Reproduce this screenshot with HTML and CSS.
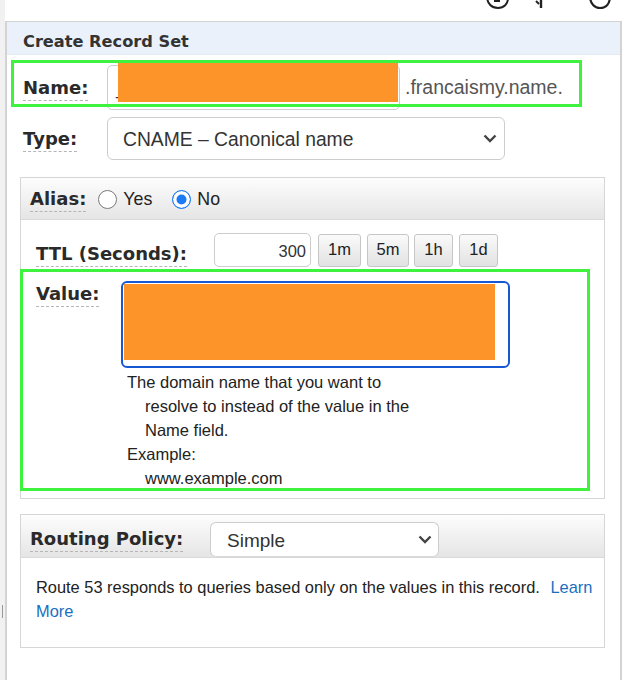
FILE: index.html
```html
<!DOCTYPE html>
<html>
<head>
<meta charset="utf-8">
<title>Create Record Set</title>
<link rel="stylesheet" href="styles.css">
</head>
<body>
<div class="page">
  <div class="leftstrip"><span class="tick"></span></div>
  <div class="main">
    <div class="topbar">
      <svg class="topicons" width="156" height="21" viewBox="0 0 156 21">
        <path d="M17 -4 C17 4 22 8 28 8 C34 8 38 4 38 -2" fill="none" stroke="#222" stroke-width="2"/>
        <path d="M24 1 L30 1" stroke="#222" stroke-width="2"/>
        <path d="M71 -2 L71 8" stroke="#222" stroke-width="2.4"/>
        <path d="M66 1 L69 4" stroke="#222" stroke-width="2"/>
        <path d="M120 -4 C120 4 125 8 130 8 C136 8 140 4 140 -4" fill="none" stroke="#222" stroke-width="2.2"/>
      </svg>
    </div>
    <div class="panel">
      <div class="panel-head">Create Record Set</div>
      <div class="panel-body">
        <div class="row name-row">
          <span class="lbl-cell"><span class="lbl">Name:</span></span>
          <div class="textbox name-input">_</div>
          <span class="suffix">.francaismy.name.</span>
          <div class="redact redact-name"></div>
          <div class="mark mark-name"></div>
        </div>

        <div class="row type-row">
          <span class="lbl-cell"><span class="lbl">Type:</span></span>
          <div class="select type-select">
            <span class="sel-text">CNAME – Canonical name</span>
            <svg class="chev" width="14" height="9" viewBox="0 0 14 9"><path d="M1.5 1.5 L7 7 L12.5 1.5" fill="none" stroke="#444" stroke-width="2.4"/></svg>
          </div>
        </div>

        <div class="box alias-box">
          <div class="box-head alias-head">
            <span class="lbl">Alias:</span>
            <span class="radio"></span><span class="radio-text">Yes</span>
            <span class="radio checked"></span><span class="radio-text">No</span>
          </div>
          <div class="ttl-row">
            <span class="ttl-lbl-cell"><span class="lbl">TTL (Seconds):</span></span>
            <div class="textbox ttl-input">300</div>
            <div class="btn b1m">1m</div>
            <div class="btn b5m">5m</div>
            <div class="btn b1h">1h</div>
            <div class="btn b1d">1d</div>
          </div>
          <div class="value-row">
            <span class="value-lbl-cell"><span class="lbl">Value:</span></span>
            <div class="textarea"><div class="redact-fill"></div></div>
          </div>
          <div class="help">
            <div>The domain name that you want to</div>
            <div class="indent">resolve to instead of the value in the</div>
            <div class="indent">Name field.</div>
            <div>Example:</div>
            <div class="indent">www.example.com</div>
          </div>
          <div class="mark mark-value"></div>
        </div>

        <div class="box routing-box">
          <div class="box-head routing-head">
            <span class="routing-lbl-cell"><span class="lbl">Routing Policy:</span></span>
            <div class="select routing-select">
              <span class="sel-text">Simple</span>
              <svg class="chev" width="14" height="9" viewBox="0 0 14 9"><path d="M1.5 1.5 L7 7 L12.5 1.5" fill="none" stroke="#444" stroke-width="2.4"/></svg>
            </div>
          </div>
          <p class="routing-body">Route 53 responds to queries based only on the values in this record. <a class="link" href="#">Learn More</a></p>
        </div>
      </div>
    </div>
  </div>
</div>
</body>
</html>
```

FILE: styles.css
```css
* { box-sizing: border-box; }
html, body { margin: 0; padding: 0; background: #fff; }
body {
  font-family: "Liberation Sans", Arial, sans-serif;
  color: #222;
  width: 626px;
  height: 680px;
  overflow: hidden;
}
.page { display: flex; height: 680px; }
.leftstrip {
  flex: 0 0 5px;
  background: #f1f1f1;
  position: relative;
}
.tick {
  position: absolute;
  left: 2px;
  top: 605px;
  width: 1px;
  height: 13px;
  background: #999;
}
.main { flex: 1; display: flex; flex-direction: column; }
.topbar { height: 21px; display: flex; justify-content: flex-end; }

.panel {
  width: 617px;
  flex: 1;
  border-left: 2px solid #d3d3d3;
  border-right: 2px solid #d3d3d3;
  border-top: 1px solid #d3d3d3;
}
.panel-head {
  height: 33px;
  background: #eaf1fb;
  border-bottom: 1px solid #e3eaf3;
  padding: 0 0 3px 16px;
  display: flex;
  align-items: flex-end;
  font-family: "DejaVu Sans", Verdana, sans-serif;
  font-weight: bold;
  font-size: 16.2px;
  color: #333;
}
.panel-body { padding: 0 15px 0 13px; }

.lbl {
  font-family: "DejaVu Sans", Verdana, sans-serif;
  font-weight: bold;
  font-size: 18px;
  color: #2a2a2a;
  border-bottom: 1px dashed #b5b5b5;
  padding-bottom: 2px;
  white-space: nowrap;
}

.row { display: flex; align-items: center; position: relative; }
.lbl-cell { flex: 0 0 87px; padding-left: 3px; }
.name-row { margin-top: 10px; height: 45px; }
.textbox {
  border: 1px solid #cdcdcd;
  border-radius: 5px;
  background: #fff;
  font-size: 17px;
  color: #333;
}
.name-input {
  width: 293px;
  height: 45px;
  padding: 14px 0 0 8px;
}
.suffix {
  margin-left: 5px;
  font-size: 19.5px;
  color: #555;
}
.redact { position: absolute; background: #fd9429; }
.redact-name { left: 98px; top: -3px; width: 280px; height: 40px; }
.mark {
  position: absolute;
  border: 3px solid #3ff23f;
  pointer-events: none;
}
.mark-name { left: -9px; top: -5px; width: 571px; height: 47px; }

.type-row { margin-top: 7px; height: 43px; }
.select {
  display: flex;
  align-items: center;
  justify-content: space-between;
  border: 1px solid #cdcdcd;
  border-radius: 6px;
  background: #fff;
  color: #333;
}
.sel-text { padding-top: 3px; }
.type-select { width: 398px; height: 43px; padding: 0 7px 0 15px; font-size: 19.3px; }

.box {
  border: 1px solid #d6d6d6;
  position: relative;
}
.alias-box { margin-top: 17px; padding-bottom: 8px; }
.box-head {
  background: linear-gradient(#fdfdfd, #e5e5e5);
  border-bottom: 1px solid #dadada;
  display: flex;
  align-items: center;
}
.alias-head { height: 42px; padding: 2px 0 0 9px; }
.radio {
  width: 19px;
  height: 19px;
  border-radius: 50%;
  border: 1px solid #7a7a7a;
  background: #fff;
  margin-left: 12px;
}
.radio.checked {
  margin-left: 20px;
  border: 1.5px solid #1b7af5;
  background: #1b7af5;
  box-shadow: inset 0 0 0 3.5px #fff;
}
.radio-text { margin-left: 6px; font-size: 17.8px; color: #222; }

.ttl-row { display: flex; align-items: center; margin-top: 13px; height: 34px; }
.ttl-lbl-cell { flex: 0 0 193px; padding-left: 15px; padding-top: 7px; }
.ttl-input {
  width: 97px;
  height: 34px;
  text-align: right;
  padding: 8px 4px 0 0;
  font-size: 16.5px;
}
.btn {
  height: 33px;
  margin-left: 6px;
  border: 1px solid #c6c6c6;
  border-radius: 3px;
  background: linear-gradient(#fafafa, #e2e2e2);
  display: flex;
  align-items: center;
  justify-content: center;
  font-size: 16.5px;
  color: #222;
  padding-bottom: 2px;
}
.b1m { width: 43px; margin-left: 7px; }
.b5m { width: 42px; }
.b1h { width: 39px; margin-left: 5px; }
.b1d { width: 39px; }

.value-row { display: flex; align-items: flex-start; margin-top: 14px; }
.value-lbl-cell { flex: 0 0 100px; padding-left: 15px; padding-top: 2px; }
.textarea {
  width: 389px;
  height: 87px;
  border: 2px solid #1657d2;
  border-radius: 6px;
  padding: 1px;
}
.redact-fill { width: 371px; height: 76px; background: #fd9429; }

.help {
  margin: 2px 0 0 106px;
  font-size: 16.5px;
  line-height: 24px;
  color: #222;
}
.help .indent { padding-left: 18px; }
.mark-value { left: -1px; top: 91px; width: 570px; height: 222px; }

.routing-box { margin-top: 15px; }
.routing-head { height: 43px; align-items: flex-end; padding-left: 9px; }
.routing-lbl-cell { flex: 0 0 180px; padding-bottom: 8px; }
.routing-select {
  width: 229px;
  height: 35px;
  padding: 0 6px 0 16px;
  font-size: 19px;
  border-bottom-color: #d8d8d8;
}
.routing-body {
  margin: 0;
  padding: 17px 2px 24px 15px;
  font-size: 16.4px;
  line-height: 24px;
  color: #222;
}
.link { color: #1a6fbf; text-decoration: none; margin-left: 6px; }
```
